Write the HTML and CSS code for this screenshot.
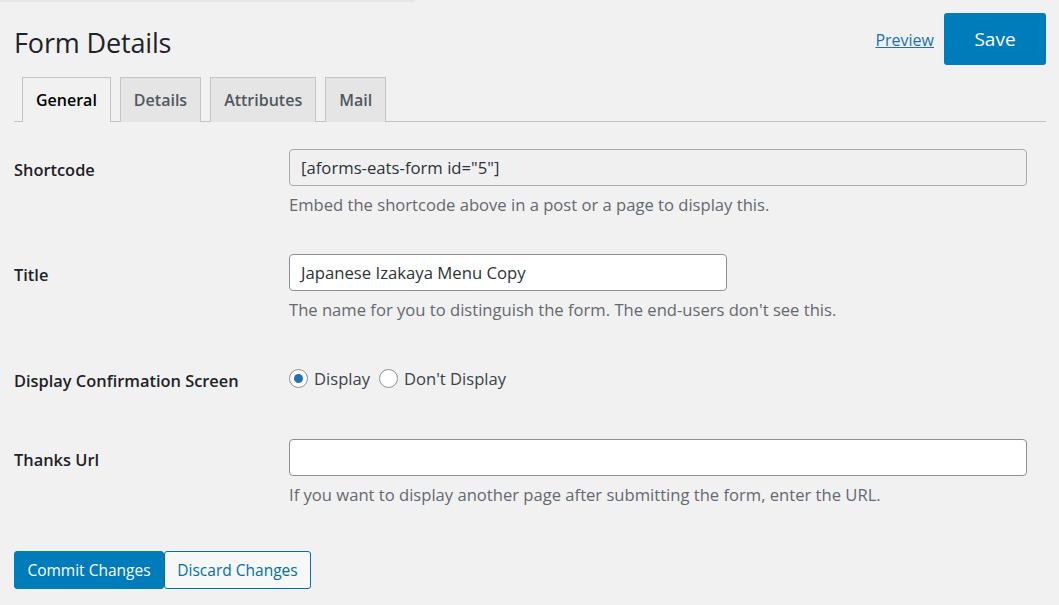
FILE: index.html
```html
<!DOCTYPE html>
<html>
<head>
<meta charset="utf-8">
<link rel="stylesheet" href="styles.css">
</head>
<body>
<div class="topbar"></div>
<div class="page">
  <header class="header">
    <h1 class="title">Form Details</h1>
    <div class="actions">
      <a class="preview" href="#">Preview</a>
      <button class="btn-save">Save</button>
    </div>
  </header>
  <nav class="tabs">
    <span class="tab active">General</span>
    <span class="tab">Details</span>
    <span class="tab">Attributes</span>
    <span class="tab">Mail</span>
  </nav>
  <div class="form">
    <div class="row row-shortcode">
      <div class="label">Shortcode</div>
      <div class="field">
        <div class="input input-wide input-disabled">[aforms-eats-form id="5"]</div>
        <p class="desc">Embed the shortcode above in a post or a page to display this.</p>
      </div>
    </div>
    <div class="row row-title">
      <div class="label">Title</div>
      <div class="field">
        <div class="input input-mid">Japanese Izakaya Menu Copy</div>
        <p class="desc">The name for you to distinguish the form. The end-users don't see this.</p>
      </div>
    </div>
    <div class="row row-confirm">
      <div class="label">Display Confirmation Screen</div>
      <div class="field radios">
        <label class="radio"><span class="dot checked"></span>Display</label>
        <label class="radio"><span class="dot"></span>Don't Display</label>
      </div>
    </div>
    <div class="row row-thanks">
      <div class="label">Thanks Url</div>
      <div class="field">
        <div class="input input-wide"></div>
        <p class="desc">If you want to display another page after submitting the form, enter the URL.</p>
      </div>
    </div>
  </div>
  <div class="buttons">
    <button class="btn-commit">Commit Changes</button>
    <button class="btn-discard">Discard Changes</button>
  </div>
</div>
</body>
</html>
```
FILE: styles.css
```css
html, body {
  margin: 0;
  padding: 0;
  background: #f1f1f1;
  font-family: "Open Sans", "Noto Sans", sans-serif;
  color: #1d2327;
}
.topbar {
  width: 415px;
  height: 2px;
  background: #e7e7e7;
}
.page {
  padding: 0 13px 0 14px;
}
.header {
  display: flex;
  justify-content: space-between;
  align-items: center;
  margin-top: 11px;
  height: 52px;
}
.title {
  margin: 6px 0 0;
  font-size: 27px;
  font-weight: 400;
  color: #1d2327;
  letter-spacing: -0.15px;
}
.actions {
  display: flex;
  align-items: center;
  gap: 10px;
}
.preview {
  color: #2271b1;
  font-size: 16px;
  text-decoration: underline;
  margin-top: 1px;
}
.btn-save {
  width: 102px;
  height: 52px;
  border: 0;
  border-radius: 3px;
  background: #007cba;
  color: #fff;
  font-family: inherit;
  font-size: 19px;
  padding: 0;
}
.tabs {
  display: flex;
  gap: 9px;
  margin-top: 12px;
  padding-left: 8px;
  border-bottom: 1px solid #c3c4c7;
  height: 44px;
}
.tab {
  box-sizing: border-box;
  height: 45px;
  padding: 0 13px;
  display: flex;
  align-items: center;
  border: 1px solid #c3c4c7;
  border-bottom: 0;
  background: #e5e5e5;
  color: #50575e;
  font-size: 16px;
  font-weight: 600;
}
.tab.active {
  background: #f1f1f1;
  color: #000;
  position: relative;
  z-index: 1;
}
.form {
  margin-top: 27px;
}
.row {
  display: flex;
}
.label {
  width: 275px;
  flex: none;
  font-size: 16.4px;
  font-weight: 600;
  color: #1d2327;
  line-height: 22px;
  padding-top: 10px;
}
.field {
  flex: 1;
}
.input {
  box-sizing: border-box;
  height: 37px;
  border: 1px solid #8c8f94;
  border-radius: 4px;
  background: #fff;
  padding: 0 11px;
  font-size: 16.7px;
  line-height: 35px;
  color: #2c3338;
}
.input-wide { width: 738px; }
.input-mid { width: 438px; }
.input-disabled {
  background: #f0f0f1;
  border-color: #a7aaad;
}
.desc {
  margin: 8px 0 0;
  font-size: 16.6px;
  line-height: 22px;
  color: #646970;
}
.row-title { margin-top: 38px; }
.row-confirm { margin-top: 49px; }
.row-confirm .label { padding-top: 0; }
.row-thanks { margin-top: 47px; }
.radios {
  display: flex;
  gap: 9px;
  align-items: center;
  height: 22px;
  margin-top: -3px;
}
.radio {
  display: flex;
  align-items: center;
  gap: 6px;
  font-size: 16.6px;
  color: #3c434a;
}
.dot {
  box-sizing: border-box;
  width: 19px;
  height: 19px;
  border: 1px solid #8c8f94;
  border-radius: 50%;
  background: #fff;
  position: relative;
}
.dot.checked::after {
  content: "";
  position: absolute;
  left: 4px;
  top: 4px;
  width: 9px;
  height: 9px;
  border-radius: 50%;
  background: #2271b1;
}
.buttons {
  display: flex;
  margin-top: 45px;
}
.btn-commit, .btn-discard {
  box-sizing: border-box;
  height: 38px;
  font-family: inherit;
  font-size: 15.5px;
  border-radius: 3px;
  padding: 0 10px;
}
.btn-commit {
  background: #007cba;
  border: 1px solid #007cba;
  color: #fff;
  width: 150px;
}
.btn-discard {
  background: #f6f7f7;
  border: 1px solid #0071a1;
  color: #0071a1;
  width: 147px;
}
```
